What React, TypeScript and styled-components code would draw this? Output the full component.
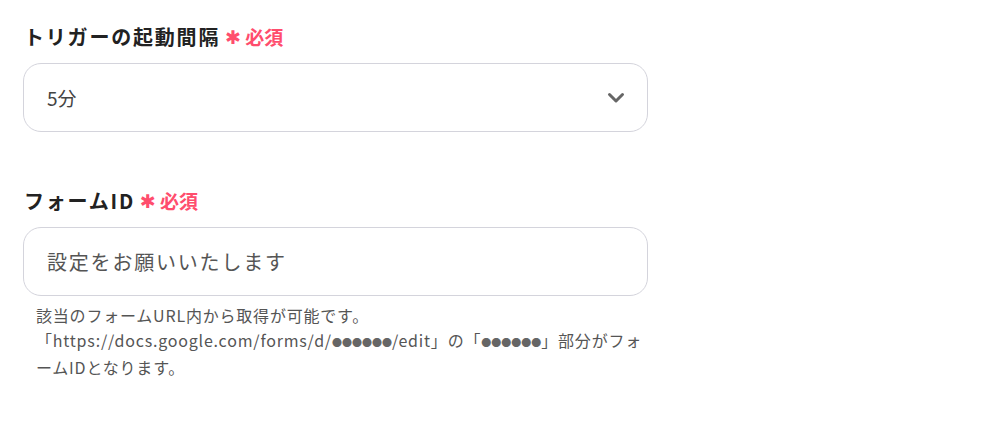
import styled, { createGlobalStyle } from 'styled-components'

const GlobalStyle = createGlobalStyle`
  body {
    margin: 0;
    background: #ffffff;
    font-family: 'Noto Sans CJK JP', 'Noto Sans', sans-serif;
    color: #333333;
  }
`

const ChevronDown: React.FC = () => (
  <svg width="18" height="12" viewBox="0 0 18 12" aria-hidden="true">
    <path
      d="M2.5 2.5 L9 9 L15.5 2.5"
      fill="none"
      stroke="#666666"
      strokeWidth="3"
      strokeLinecap="round"
      strokeLinejoin="round"
    />
  </svg>
)

const RequiredMark: React.FC = () => (
  <Required>
    <Asterisk>✱</Asterisk>必須
  </Required>
)

export default function App() {
  return (
    <>
      <GlobalStyle />
      <Form>
        <Field>
          <Label>
            トリガーの起動間隔
            <RequiredMark />
          </Label>
          <SelectBox>
            <Value>5分</Value>
            <ChevronDown />
          </SelectBox>
        </Field>
        <Field>
          <Label>
            フォームID
            <RequiredMark />
          </Label>
          <TextInput placeholder="設定をお願いいたします" />
          <Help>
            該当のフォームURL内から取得が可能です。
            <br />
            「https://docs.google.com/forms/d/<Dots>●●●●●●</Dots>/edit」の「
            <Dots>●●●●●●</Dots>」部分がフォームIDとなります。
          </Help>
        </Field>
      </Form>
    </>
  )
}

const Form = styled.div`
  display: flex;
  flex-direction: column;
  gap: 54px;
  width: 625px;
  padding: 22px 0 0 23px;
`

const Field = styled.div`
  display: flex;
  flex-direction: column;
`

const Label = styled.div`
  display: flex;
  align-items: center;
  height: 28px;
  margin-bottom: 13px;
  padding-left: 1px;
  font-size: 20px;
  font-weight: 700;
  letter-spacing: 0.09em;
  color: #222222;
`

const Required = styled.span`
  display: inline-flex;
  align-items: center;
  margin-left: 5px;
  font-size: 19px;
  font-weight: 700;
  letter-spacing: 0;
  color: #ff4d6d;
`

const Asterisk = styled.span`
  font-family: 'DejaVu Sans', sans-serif;
  font-size: 19px;
  margin: 2px 4px 0 0;
`

const SelectBox = styled.div`
  box-sizing: border-box;
  display: flex;
  align-items: center;
  justify-content: space-between;
  height: 69px;
  padding: 0 22px 0 23px;
  border: 1px solid #d4d4dc;
  border-radius: 18px;
  background: #ffffff;
`

const Value = styled.span`
  font-size: 19px;
  color: #444444;
`

const TextInput = styled.input`
  box-sizing: border-box;
  width: 100%;
  height: 69px;
  padding: 0 23px;
  border: 1px solid #d4d4dc;
  border-radius: 18px;
  outline: none;
  font-family: 'Noto Sans CJK JP', 'Noto Sans', sans-serif;
  font-size: 20px;
  letter-spacing: 1.8px;
  color: #333333;

  &::placeholder {
    color: #555555;
  }
`

const Help = styled.p`
  margin: 7px 0 0;
  padding: 0 4px 0 13px;
  font-size: 16px;
  line-height: 25px;
  letter-spacing: 0.05em;
  color: #555555;
`

const Dots = styled.span`
  font-size: 10px;
  color: #666666;
  letter-spacing: 0;
`
